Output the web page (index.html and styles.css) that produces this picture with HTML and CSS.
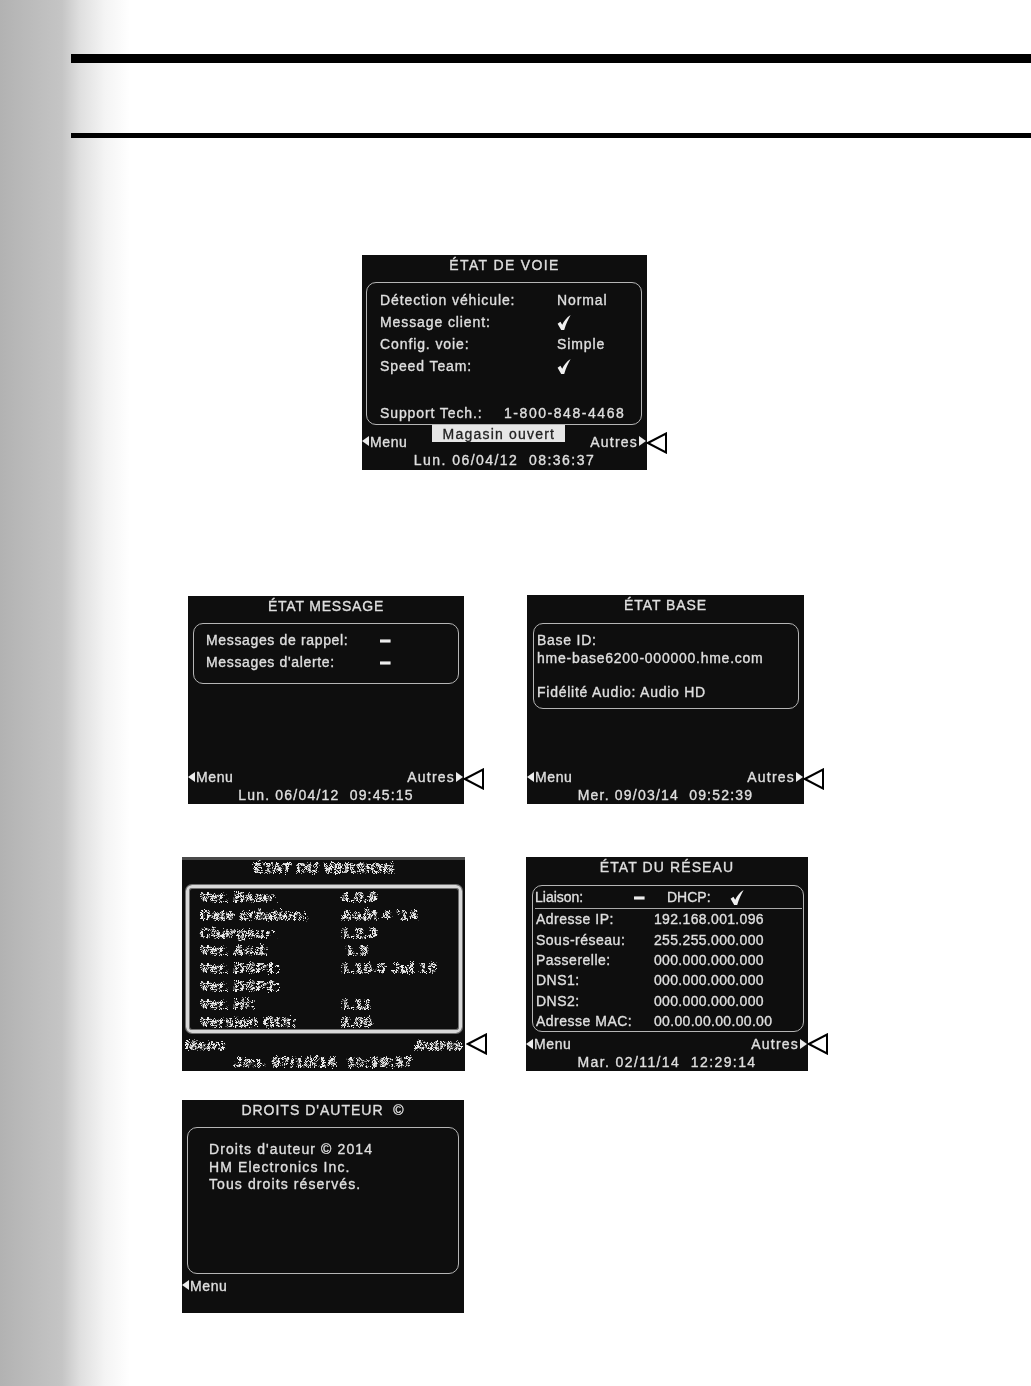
FILE: index.html
```html
<!DOCTYPE html>
<html lang="fr">
<head>
<meta charset="utf-8">
<title>États de l'écran</title>
<link rel="stylesheet" href="styles.css">
</head>
<body>
<svg class="defs" width="0" height="0" aria-hidden="true">
  <defs>
    <filter id="noise" x="-5%" y="-25%" width="110%" height="150%">
      <feMorphology operator="dilate" radius="0.35" result="d"/>
      <feTurbulence type="fractalNoise" baseFrequency="1.05" numOctaves="2" seed="4" result="n"/>
      <feDisplacementMap in="d" in2="n" scale="7.5" xChannelSelector="R" yChannelSelector="G"/>
      <feGaussianBlur stdDeviation="0.3"/>
    </filter>
    <symbol id="check" viewBox="0 0 14 16"><path d="M.6 9.2 L3.4 7.2 L5.2 10.2 C7 6.6 9.6 3 13.6 .4 C11.4 4.4 8.8 9.6 7.2 15.6 L4.2 15.6 Z" fill="#f0f0f0"/></symbol>
    <symbol id="pointer" viewBox="0 0 22 22"><path d="M1.8 11 L20 1.5 V20.5 Z" fill="#fff" stroke="#000" stroke-width="2"/></symbol>
  </defs>
</svg>
<div class="page">
  <div class="rule rule-thick"></div>
  <div class="rule rule-thin"></div>
  <main class="screens">
    <section class="line line-one">
      <div class="screen voie">
        <div class="title">ÉTAT DE VOIE</div>
        <div class="box">
          <div class="row"><span>Détection véhicule:</span><span>Normal</span></div>
          <div class="row"><span>Message client:</span><svg class="check"><use href="#check"/></svg></div>
          <div class="row"><span>Config. voie:</span><span>Simple</span></div>
          <div class="row"><span>Speed Team:</span><svg class="check"><use href="#check"/></svg></div>
          <div class="row row-end"><span>Support Tech.:</span><span class="phone">1-800-848-4468</span></div>
        </div>
        <div class="foot">
          <div class="nav"><span class="menu">Menu</span><span class="status">Magasin ouvert</span><span class="more">Autres</span></div>
          <div class="date">Lun. 06/04/12  08:36:37</div>
        </div>
        <svg class="pointer"><use href="#pointer"/></svg>
      </div>
    </section>
    <section class="line line-two">
      <div class="screen message">
        <div class="title">ÉTAT MESSAGE</div>
        <div class="box">
          <div class="row"><span>Messages de rappel:</span><b class="dash">–</b></div>
          <div class="row"><span>Messages d'alerte:</span><b class="dash">–</b></div>
        </div>
        <div class="foot">
          <div class="nav"><span class="menu">Menu</span><span class="more">Autres</span></div>
          <div class="date">Lun. 06/04/12  09:45:15</div>
        </div>
        <svg class="pointer"><use href="#pointer"/></svg>
      </div>
      <div class="screen base">
        <div class="title">ÉTAT BASE</div>
        <div class="box">
          <div class="text">Base ID:</div>
          <div class="text">hme-base6200-000000.hme.com</div>
          <div class="text text-gap">Fidélité Audio: Audio HD</div>
        </div>
        <div class="foot">
          <div class="nav"><span class="menu">Menu</span><span class="more">Autres</span></div>
          <div class="date">Mer. 09/03/14  09:52:39</div>
        </div>
        <svg class="pointer"><use href="#pointer"/></svg>
      </div>
    </section>
    <section class="line line-three">
      <div class="screen version">
        <div class="title">ÉTAT DU VERSION</div>
        <div class="box">
          <div class="row"><span>Ver. Base:</span><span>4.0.6</span></div>
          <div class="row"><span>Date création:</span><span>Août 4 '14</span></div>
          <div class="row"><span>Chargeur:</span><span>1.2.3</span></div>
          <div class="row"><span>Ver. Aud:</span><span> 1.5</span></div>
          <div class="row"><span>Ver. DSP1:</span><span>1.10.0 Jul 10</span></div>
          <div class="row"><span>Ver. DSP2:</span><span></span></div>
          <div class="row"><span>Ver. Hi:</span><span>1.11</span></div>
          <div class="row"><span>Version GUI:</span><span>2.00</span></div>
        </div>
        <div class="foot">
          <div class="nav"><span>Menu</span><span>Autres</span></div>
          <div class="date">Jeu. 07/10/14  10:29:37</div>
        </div>
        <svg class="pointer"><use href="#pointer"/></svg>
      </div>
      <div class="screen reseau">
        <div class="title">ÉTAT DU RÉSEAU</div>
        <div class="box">
          <div class="link">
            <span>Liaison:</span><b class="dash">–</b><span>DHCP:</span><svg class="check"><use href="#check"/></svg>
          </div>
          <div class="row"><span>Adresse IP:</span><span>192.168.001.096</span></div>
          <div class="row"><span>Sous-réseau:</span><span>255.255.000.000</span></div>
          <div class="row"><span>Passerelle:</span><span>000.000.000.000</span></div>
          <div class="row"><span>DNS1:</span><span>000.000.000.000</span></div>
          <div class="row"><span>DNS2:</span><span>000.000.000.000</span></div>
          <div class="row"><span>Adresse MAC:</span><span>00.00.00.00.00.00</span></div>
        </div>
        <div class="foot">
          <div class="nav"><span class="menu">Menu</span><span class="more">Autres</span></div>
          <div class="date">Mar. 02/11/14  12:29:14</div>
        </div>
        <svg class="pointer"><use href="#pointer"/></svg>
      </div>
    </section>
    <section class="line line-four">
      <div class="screen auteur">
        <div class="title">DROITS D'AUTEUR  ©</div>
        <div class="box">
          <div class="text">Droits d'auteur © 2014</div>
          <div class="text">HM Electronics Inc.</div>
          <div class="text">Tous droits réservés.</div>
        </div>
        <div class="foot">
          <div class="nav"><span class="menu">Menu</span></div>
        </div>
      </div>
    </section>
  </main>
</div>
</body>
</html>
```
FILE: styles.css
```css
* { box-sizing: border-box; }
html, body { margin: 0; padding: 0; }
body {
  width: 1031px;
  height: 1386px;
  overflow: hidden;
  font-family: "Liberation Sans", Arial, sans-serif;
  background: linear-gradient(90deg, #b2b2b2 0, #c5c5c5 62px, #dfdfdf 80px, #f4f4f4 105px, #fff 130px);
}
.defs { position: absolute; }
.page { padding-top: 54px; }
.rule { margin-left: 71px; background: #000; }
.rule-thick { height: 9px; }
.rule-thin { height: 5px; margin-top: 70px; }

.screens { display: flex; flex-direction: column; }
.line { display: flex; }
.line-one { margin-top: 117px; padding-left: 362px; }
.line-two { margin-top: 125px; padding-left: 188px; gap: 63px; align-items: flex-end; }
.line-three { margin-top: 53px; padding-left: 182px; gap: 61px; }
.line-four { margin-top: 29px; padding-left: 182px; }

.screen {
  position: relative;
  display: flex;
  flex-direction: column;
  background: #0e0e0e;
  color: #e0e0e0;
  font-size: 14px;
  letter-spacing: .75px;
  -webkit-text-stroke: .35px #dcdcdc;
}
.screen > .title, .screen > .box, .screen > .foot { filter: blur(.5px); }
.voie { width: 285px; height: 215px; }
.message { width: 276px; height: 208px; }
.base { width: 277px; height: 209px; }
.version { width: 283px; height: 214px; }
.reseau { width: 282px; height: 214px; }
.auteur { width: 282px; height: 213px; }

.title { height: 20px; line-height: 20px; text-align: center; white-space: pre; letter-spacing: .9px; }
.box {
  margin-top: 7px;
  border: 1.5px solid #b5b5b5;
  border-radius: 10px;
  display: flex;
  flex-direction: column;
}
.row { display: grid; height: 22px; line-height: 22px; white-space: pre; align-items: center; }
.row-end { margin-top: auto; }
.text { height: 18px; line-height: 18px; }
.check { width: 14px; height: 17px; display: block; }
.dash { display: block; font-size: 19px; line-height: 22px; letter-spacing: 0; color: #f0f0f0; -webkit-text-stroke: 1.1px #f0f0f0; }

.foot { margin-top: auto; }
.nav { height: 17px; line-height: 17px; display: flex; justify-content: space-between; padding-left: 8px; padding-right: 9px; letter-spacing: 1.2px; position: relative; }
.menu { letter-spacing: .6px; }
.menu::before, .more::after {
  content: "";
  position: absolute;
  top: 3px;
  border-style: solid;
  border-width: 5px 0;
  border-color: transparent;
}
.menu::before { left: 0; border-right: 7px solid #ececec; }
.more::after { right: 1px; border-left: 7px solid #ececec; }
.status {
  width: 133px;
  height: 17px;
  margin: -8px 0 0 0;
  line-height: 18px;
  text-align: center;
  background: #e6e6e6;
  color: #222;
  -webkit-text-stroke: .3px #222;
}
.date { height: 18px; line-height: 18px; text-align: center; white-space: pre; letter-spacing: 1.2px; }
.pointer { position: absolute; left: 100%; bottom: 16px; width: 22px; height: 22px; margin-left: -1px; }

/* per-screen box geometry */
.voie .title { letter-spacing: 1.35px; }
.voie .box { height: 143px; margin-left: 4px; margin-right: 5px; padding: 6px 13px 0; letter-spacing: .9px; }
.voie .row { grid-template-columns: 177px 1fr; }
.voie .row-end { grid-template-columns: 124px 1fr; }
.voie .phone { letter-spacing: 1.55px; }
.voie .nav { height: 18px; line-height: 18px; }
.voie .date { letter-spacing: 1.45px; margin-bottom: 1px; }

.message .box { height: 61px; margin-left: 5px; margin-right: 5px; padding: 5px 12px 0; letter-spacing: .65px; }
.message .row { grid-template-columns: 174px 1fr; }
.message .title { letter-spacing: .8px; }
.message .pointer, .base .pointer { bottom: 14px; }

.base .box { height: 86px; margin: 8px 5px 0 6px; padding: 7px 3px 0; letter-spacing: .75px; }
.base .text-gap { margin-top: 16px; }

.reseau .box { height: 147px; margin: 8px 4px 0 6px; padding: 0 1px 0 2px; }
.reseau .title { letter-spacing: 1.1px; }
.reseau .link {
  display: grid;
  grid-template-columns: 99px 33px 63px 1fr;
  align-items: center;
  height: 23.5px;
  border-bottom: 1.5px solid #aaa;
  letter-spacing: 0;
}
.reseau .row { height: 20.6px; line-height: 20px; grid-template-columns: 118px 1fr; margin-left: 1px; letter-spacing: .5px; }
.reseau .row span + span { letter-spacing: .32px; }
.reseau .date { letter-spacing: 1.4px; }

.version { border-top: 3px solid #4a4a4a; color: #ececec; -webkit-text-stroke: 0; font-weight: bold; font-size: 15px; letter-spacing: .6px; }
.version > .title, .version > .foot > .date, .version .row > span, .version .nav > span { filter: url(#noise); }
.version > .box { filter: blur(.4px); }
.version > .foot { filter: none; }
.version > .pointer { margin-left: 1px; }
.version .title { height: 16px; line-height: 16px; letter-spacing: .4px; }
.version .box { height: 148px; margin: 9px 3px 0 4px; padding: 0 11px; border: 3px solid #d8d8d8; border-radius: 6px; box-shadow: 0 0 0 1px #6f6f6f, inset 0 0 0 1px #6f6f6f; }
.version .row { height: 17.8px; line-height: 18px; grid-template-columns: 141px 1fr; }
.version .nav { padding-left: 3px; padding-right: 2px; letter-spacing: .3px; }
.version .date { letter-spacing: .8px; }

.auteur .box { height: 147px; margin: 7px 5px 0 5px; padding: 13px 21px 0; letter-spacing: 1.1px; }
.auteur .text { height: 17.5px; line-height: 17.5px; }
.auteur .title { letter-spacing: 1px; }
.auteur .nav { margin-bottom: 18px; height: 18px; line-height: 18px; }
```
